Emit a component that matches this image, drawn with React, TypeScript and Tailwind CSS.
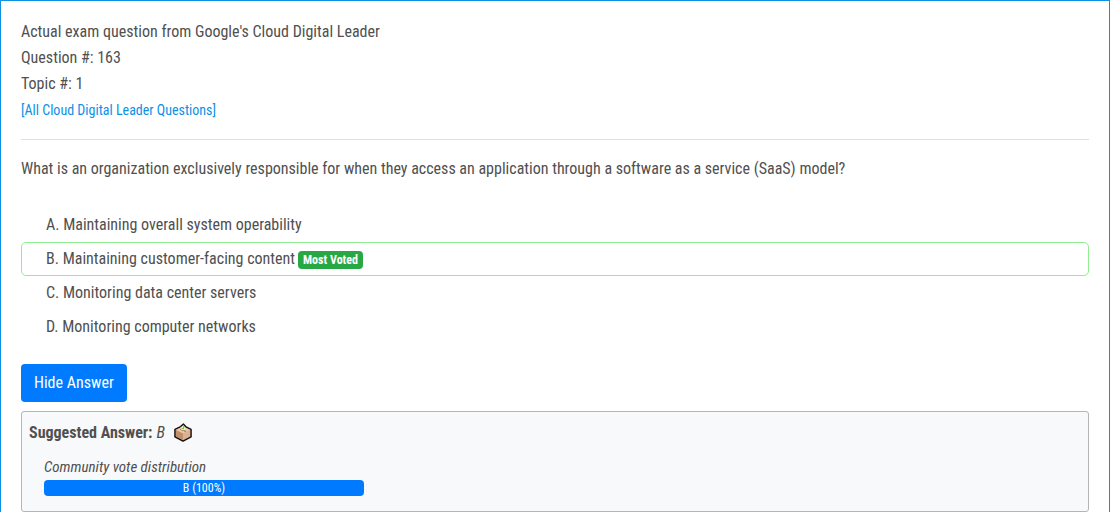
const options = [
  { letter: "A", text: "Maintaining overall system operability" },
  { letter: "B", text: "Maintaining customer-facing content", mostVoted: true },
  { letter: "C", text: "Monitoring data center servers" },
  { letter: "D", text: "Monitoring computer networks" },
];

const votes = [{ answer: "B", percent: 100 }];

function BallotBox() {
  return (
    <svg viewBox="0 0 20 20" className="size-5" role="img" aria-label="Ballot box">
      <path d="M10.5 1.2 12.6 3.6 18 6.4V13.8L10 18 2 13.8V6.4L7.6 3.6Z" fill="#dcab89" stroke="#17120f" strokeWidth="1.6" strokeLinejoin="round" />
      <path d="M2.8 7 10 3.4 17.2 7 10 10.6Z" fill="#ecc7ae" />
      <path d="M2.8 7 10 10.6V17.2L2.8 13.4Z" fill="#c0906a" />
      <path d="M17.2 7 10 10.6V17.2L17.2 13.4Z" fill="#ddb191" />
      <path d="M7.4 6.4 12.8 8.4" stroke="#7a5745" strokeWidth="1" />
      <path d="M7.6 4.4 10.5 2 12.8 5.8 10.8 7.4 8 6.4Z" fill="#f7f9ec" />
      <path d="M8.4 5.2 10.6 5.8 10.6 3" fill="none" stroke="#6fd322" strokeWidth="1.2" />
    </svg>
  );
}

export default function App() {
  return (
    <main className="border border-b-0 border-[#0c91e5] bg-white px-5 pt-[18px] font-['Roboto_Condensed','Liberation_Sans_Narrow',Roboto,sans-serif] text-base leading-[26px] text-[#505050]">
      <header className="border-b border-[#dfdfdf] pb-[15px]">
        <p>Actual exam question from Google's Cloud Digital Leader</p>
        <p>Question #: 163</p>
        <p>Topic #: 1</p>
        <a href="#questions" className="block w-fit text-sm leading-[27px] text-[#0c91e5]">
          [All Cloud Digital Leader Questions]
        </a>
      </header>

      <p className="pt-4">
        What is an organization exclusively responsible for when they access an application through a software as a
        service (SaaS) model?
      </p>

      <ul className="mt-[26px]">
        {options.map((option) => (
          <li
            key={option.letter}
            className={`flex min-h-[34px] items-center gap-[3px] rounded-[5px] border px-6 ${
              option.mostVoted ? "border-[#90ee90]" : "border-transparent"
            }`}
          >
            <span>
              {option.letter}. {option.text}
            </span>
            {option.mostVoted && (
              <span className="mt-0.5 rounded bg-[#28a745] px-[5px] text-xs leading-[18px] font-bold text-white">
                Most Voted
              </span>
            )}
          </li>
        ))}
      </ul>

      <button type="button" className="mt-5 block rounded bg-[#007bff] px-[13px] py-1.5 text-white">
        Hide Answer
      </button>

      <section className="mt-[9px] rounded-[3px] border border-[#b5b5b5] bg-[#f8f9fb] px-[7px] pt-2 pb-[15px]">
        <div className="flex items-center">
          <strong className="font-bold">Suggested Answer:</strong>
          <em className="ml-1">B</em>
          <span className="ml-2">
            <BallotBox />
          </span>
        </div>
        <div className="mt-2.5 ml-[15px] max-w-80">
          <p className="mb-0.5 text-[15px] leading-[22px] italic">Community vote distribution</p>
          <div className="flex overflow-hidden rounded bg-[#e9ecef]">
            {votes.map((vote) => (
              <div
                key={vote.answer}
                className="bg-[#007bff] text-center text-xs leading-4 text-white"
                style={{ width: `${vote.percent}%` }}
              >
                {vote.answer} ({vote.percent}%)
              </div>
            ))}
          </div>
        </div>
      </section>
    </main>
  );
}
